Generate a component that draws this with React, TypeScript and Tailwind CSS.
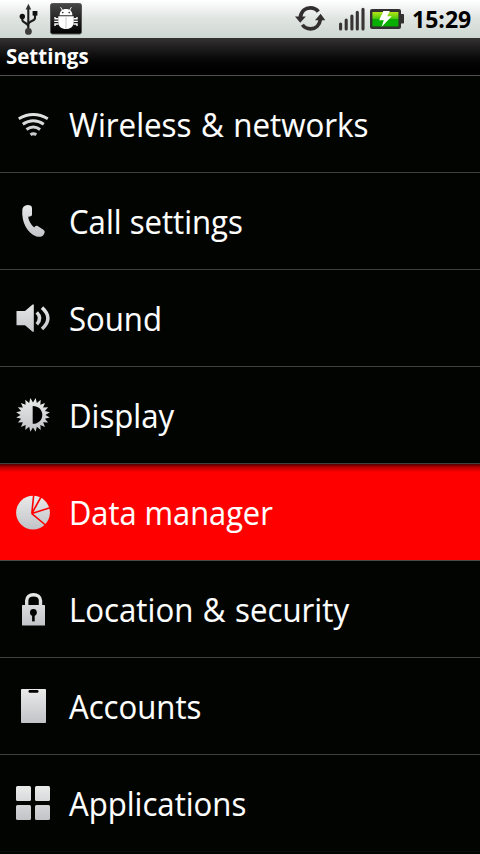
import type { ReactNode } from "react";

const ICON_FILL = "url(#silver)";

// Shared gradient for all the list icons
const Defs = () => (
  <defs>
    <linearGradient id="silver" gradientUnits="userSpaceOnUse" x1="0" y1="0" x2="0" y2="36">
      <stop offset="0" stopColor="#ececec" />
      <stop offset="1" stopColor="#c0c2c6" />
    </linearGradient>
  </defs>
);

const WifiIcon = () => (
  <g fill="none" stroke={ICON_FILL} strokeWidth="3" strokeLinecap="butt">
    <path d="M3.8 12.7Q18.3 4.2 32.8 12.7" />
    <path d="M7.8 18.2Q18.3 11.2 28.8 18.2" />
    <path d="M11.5 23.5Q18.3 18.5 25.1 23.5" />
    <path d="M15.5 28.7Q18.3 26.7 21.3 28.7" />
  </g>
);

const PhoneIcon = () => (
  <path
    fill={ICON_FILL}
    d="M7.3 7C7.4 4 9.5 2.2 12.5 2C15.5 2 17 3 17 5.3V11.5C17 13 16 13.4 13.2 13.8C13.6 17.5 15.8 22 19.3 24.6C20 23.2 21.2 22.2 23 23.2L28.4 26.7C30 27.9 30.1 29.2 28.9 31.2C27.4 33.8 25 34.3 21.5 33.4C12.5 30.5 6.4 19.5 7.3 7Z"
  />
);

const SoundIcon = () => (
  <>
    <path fill={ICON_FILL} d="M1.5 11H10L17.6 4.4H18.8V31.7H17.6L10 25.3H1.5Z" />
    <g fill="none" stroke={ICON_FILL} strokeWidth="3.5">
      <path d="M21.8 12.4Q27.4 18.2 21.8 24.2" />
      <path d="M27 7.6Q38.8 18.2 27 29" />
    </g>
  </>
);

const SPIKES = Array.from({ length: 40 }, (_, i) => {
  const r = i % 2 ? 12.5 : 17;
  const a = (i * Math.PI) / 20 - Math.PI / 2 + Math.PI / 20;
  return `${(18 + r * Math.cos(a)).toFixed(2)},${(17.9 + r * Math.sin(a)).toFixed(2)}`;
}).join(" ");

const DisplayIcon = () => (
  <>
    <polygon fill={ICON_FILL} points={SPIKES} />
    <path fill="#000" d="M17.7 9C23.5 9 27.3 13 27.3 17.9C27.3 22.8 23.5 26.8 17.7 26.8Z" />
  </>
);

const PieIcon = () => (
  <>
    <circle cx="18" cy="18.6" r="16.9" fill={ICON_FILL} />
    <path
      d="M18.7 1L16.8 19.6L26 3M16.8 19.6L35 13.8M16.8 19.6L30.5 31"
      fill="none"
      stroke="#f00"
      strokeWidth="1.6"
    />
  </>
);

const LockIcon = () => (
  <>
    <path
      d="M11.7 15V9.5C11.7 5.8 14.5 3.7 18.5 3.7S25.5 5.8 25.5 9.5V15"
      fill="none"
      stroke={ICON_FILL}
      strokeWidth="3.4"
    />
    <rect x="7" y="14" width="23" height="20.5" rx="0.6" fill={ICON_FILL} />
    <circle cx="18.4" cy="21.4" r="3.4" fill="#000" />
    <path d="M18.4 21V30.4" stroke="#000" strokeWidth="2.6" />
  </>
);

const AccountsIcon = () => (
  <>
    <rect x="6" y="1" width="25" height="34" rx="0.8" fill={ICON_FILL} />
    <rect x="13.5" y="2" width="10" height="2.8" rx="1.3" fill="#000" />
  </>
);

const AppsIcon = () => (
  <g fill={ICON_FILL}>
    <rect x="1" y="1" width="15" height="15" rx="1.5" />
    <rect x="20" y="1" width="15" height="15" rx="1.5" />
    <rect x="1" y="20" width="15" height="15" rx="1.5" />
    <rect x="20" y="20" width="15" height="15" rx="1.5" />
  </g>
);

type Item = { label: string; icon: ReactNode; selected?: boolean; fit?: string };

const items: Item[] = [
  { label: "Wireless & networks", icon: <WifiIcon />, fit: "scale-x-[0.948] [word-spacing:1.5px]" },
  { label: "Call settings", icon: <PhoneIcon /> },
  { label: "Sound", icon: <SoundIcon /> },
  { label: "Display", icon: <DisplayIcon /> },
  { label: "Data manager", icon: <PieIcon />, selected: true, fit: "scale-x-[0.933]" },
  { label: "Location & security", icon: <LockIcon />, fit: "scale-x-[0.946] [word-spacing:1.5px]" },
  { label: "Accounts", icon: <AccountsIcon /> },
  { label: "Applications", icon: <AppsIcon /> },
];

const UsbIcon = () => (
  <svg className="ml-[18px] h-[38px] w-5" viewBox="0 0 20 38">
    <g fill="none" stroke="#1c1c1c" strokeWidth="2.1">
      <path d="M10.3 7V31" />
      <path d="M4.3 17V20C4.3 23 10.3 22.5 10.3 26.5" />
      <path d="M17 14V18C17 21.5 10.3 20.5 10.3 24.5" />
    </g>
    <path fill="#333" d="M10.4 3.8L13.2 9.4H7.6Z" />
    <circle cx="4.3" cy="16.5" r="2.7" fill="#111" />
    <rect x="14.6" y="11" width="4.8" height="4.6" fill="#111" />
    <circle cx="10.4" cy="31.4" r="3.4" fill="#3d3d3d" />
  </svg>
);

const BugIcon = () => (
  <svg className="ml-3 h-[38px] w-8" viewBox="0 0 32 38">
    <defs>
      <linearGradient id="bug" x1="0" y1="0" x2="0" y2="1">
        <stop offset="0" stopColor="#474747" />
        <stop offset="1" stopColor="#000" />
      </linearGradient>
    </defs>
    <rect x="0.5" y="3.5" width="31" height="30.5" rx="2" fill="url(#bug)" stroke="#555" />
    <path fill="#fff" d="M9.6 15.3C9.8 11 12 9 16 9S22.2 11 22.4 15.3Z" />
    <path d="M10.6 7.2L12.4 10.2M21.4 7.2L19.6 10.2" stroke="#fff" strokeWidth="1" />
    <path fill="#fff" d="M8.3 16.2H23.7V22C23.7 26.4 20.5 29 16 29S8.3 26.4 8.3 22Z" />
    <circle cx="12.8" cy="12.6" r="0.8" fill="#222" />
    <circle cx="19.2" cy="12.6" r="0.8" fill="#222" />
    <path d="M16 17V29" stroke="#c8c8c8" strokeWidth="1" />
    <path
      d="M8.5 18.8H5V17M8.5 21.4H4.2M8.5 24H5V26M23.5 18.8H27V17M23.5 21.4H27.8M23.5 24H27V26"
      fill="none"
      stroke="#fff"
      strokeWidth="1.4"
    />
  </svg>
);

const SyncIcon = () => (
  <svg className="h-[38px] w-[30px]" viewBox="0 0 30 38">
    <g fill="none" stroke="#332f30" strokeWidth="3.7">
      <path d="M5.3 17.5C6.2 11 10.5 7.8 15.3 7.8C18.6 7.8 21.6 9.2 23.3 11.6" />
      <path d="M25.5 19C24.6 25.5 20.4 28.8 15.6 28.8C12.2 28.8 9.2 27.4 7.4 24.8" />
    </g>
    <path fill="#332f30" d="M0 16.6H10.8L5.2 22.8ZM20 20.2L25.6 13.8L30.4 20.2Z" />
  </svg>
);

const SignalIcon = () => (
  <svg className="ml-[14px] h-[38px] w-[26px]" viewBox="0 0 26 38">
    <path
      d="M1.6 24V29M7.2 20V29M12.9 16V29M18.3 12.3V29M24 9.3V29"
      stroke="#383435"
      strokeWidth="3.1"
      strokeLinecap="round"
    />
  </svg>
);

const BatteryIcon = () => (
  <svg className="ml-[5px] h-[38px] w-[34px]" viewBox="0 0 34 38">
    <defs>
      <linearGradient id="charge" x1="0" y1="0" x2="0" y2="1">
        <stop offset="0" stopColor="#b5e61a" />
        <stop offset="0.45" stopColor="#4ecb0a" />
        <stop offset="0.5" stopColor="#0cac05" />
        <stop offset="1" stopColor="#04b100" />
      </linearGradient>
    </defs>
    <rect x="0" y="9" width="31" height="20" rx="2" fill="#333031" />
    <rect x="30" y="14" width="4" height="9.5" rx="0.8" fill="#333031" />
    <rect x="2.4" y="12" width="26" height="14.4" fill="url(#charge)" />
    <path fill="#fff" d="M13.3 11L19.8 11L17.3 16.2H21.8L11.5 27L13.8 20.2H9.2Z" />
  </svg>
);

const StatusBar = () => (
  <div className="flex h-[38px] shrink-0 items-center bg-linear-to-b from-white via-[#dfe4e1] to-[#ced8d3]">
    <UsbIcon />
    <BugIcon />
    <div className="ml-auto flex items-center">
      <SyncIcon />
      <SignalIcon />
      <BatteryIcon />
      <span className="ml-2 w-[68px] origin-left scale-x-[0.96] whitespace-nowrap text-[24px] leading-[38px] font-bold text-black">
        15:29
      </span>
    </div>
  </div>
);

const Row = ({ label, icon, selected, fit = "scale-x-[0.943]" }: Item) => (
  <li
    className={
      selected
        ? "flex h-[97px] shrink-0 items-center border-b border-[#4a4a4a] bg-[linear-gradient(to_bottom,#500000,#b00000_3px,#ff0000_8px)] pl-[15px]"
        : "flex h-[97px] shrink-0 items-center border-b border-[#404040] pl-[15px] last:border-[#0e100e]"
    }
  >
    <svg className="size-9 shrink-0" viewBox="0 0 36 36">
      <Defs />
      {icon}
    </svg>
    <span
      className={`ml-[18px] origin-left whitespace-nowrap pt-px text-[33px] leading-[44px] text-white [-webkit-text-stroke:0.1px_white] ${fit}`}
    >
      {label}
    </span>
  </li>
);

const App = () => {
  return (
    <div className="flex h-[854px] w-[480px] flex-col overflow-hidden bg-[#020402] font-['Open_Sans',sans-serif]">
      <StatusBar />
      <h1 className="h-[38px] shrink-0 border-b border-[#505050] bg-linear-to-b from-[#343233] to-black pl-1.5 text-[21px] leading-[37px] font-bold text-white">
        <span className="inline-block origin-left scale-x-[0.975]">Settings</span>
      </h1>
      <ul className="flex flex-col">
        {items.map((item) => (
          <Row key={item.label} {...item} />
        ))}
      </ul>
    </div>
  );
};

export default App;
